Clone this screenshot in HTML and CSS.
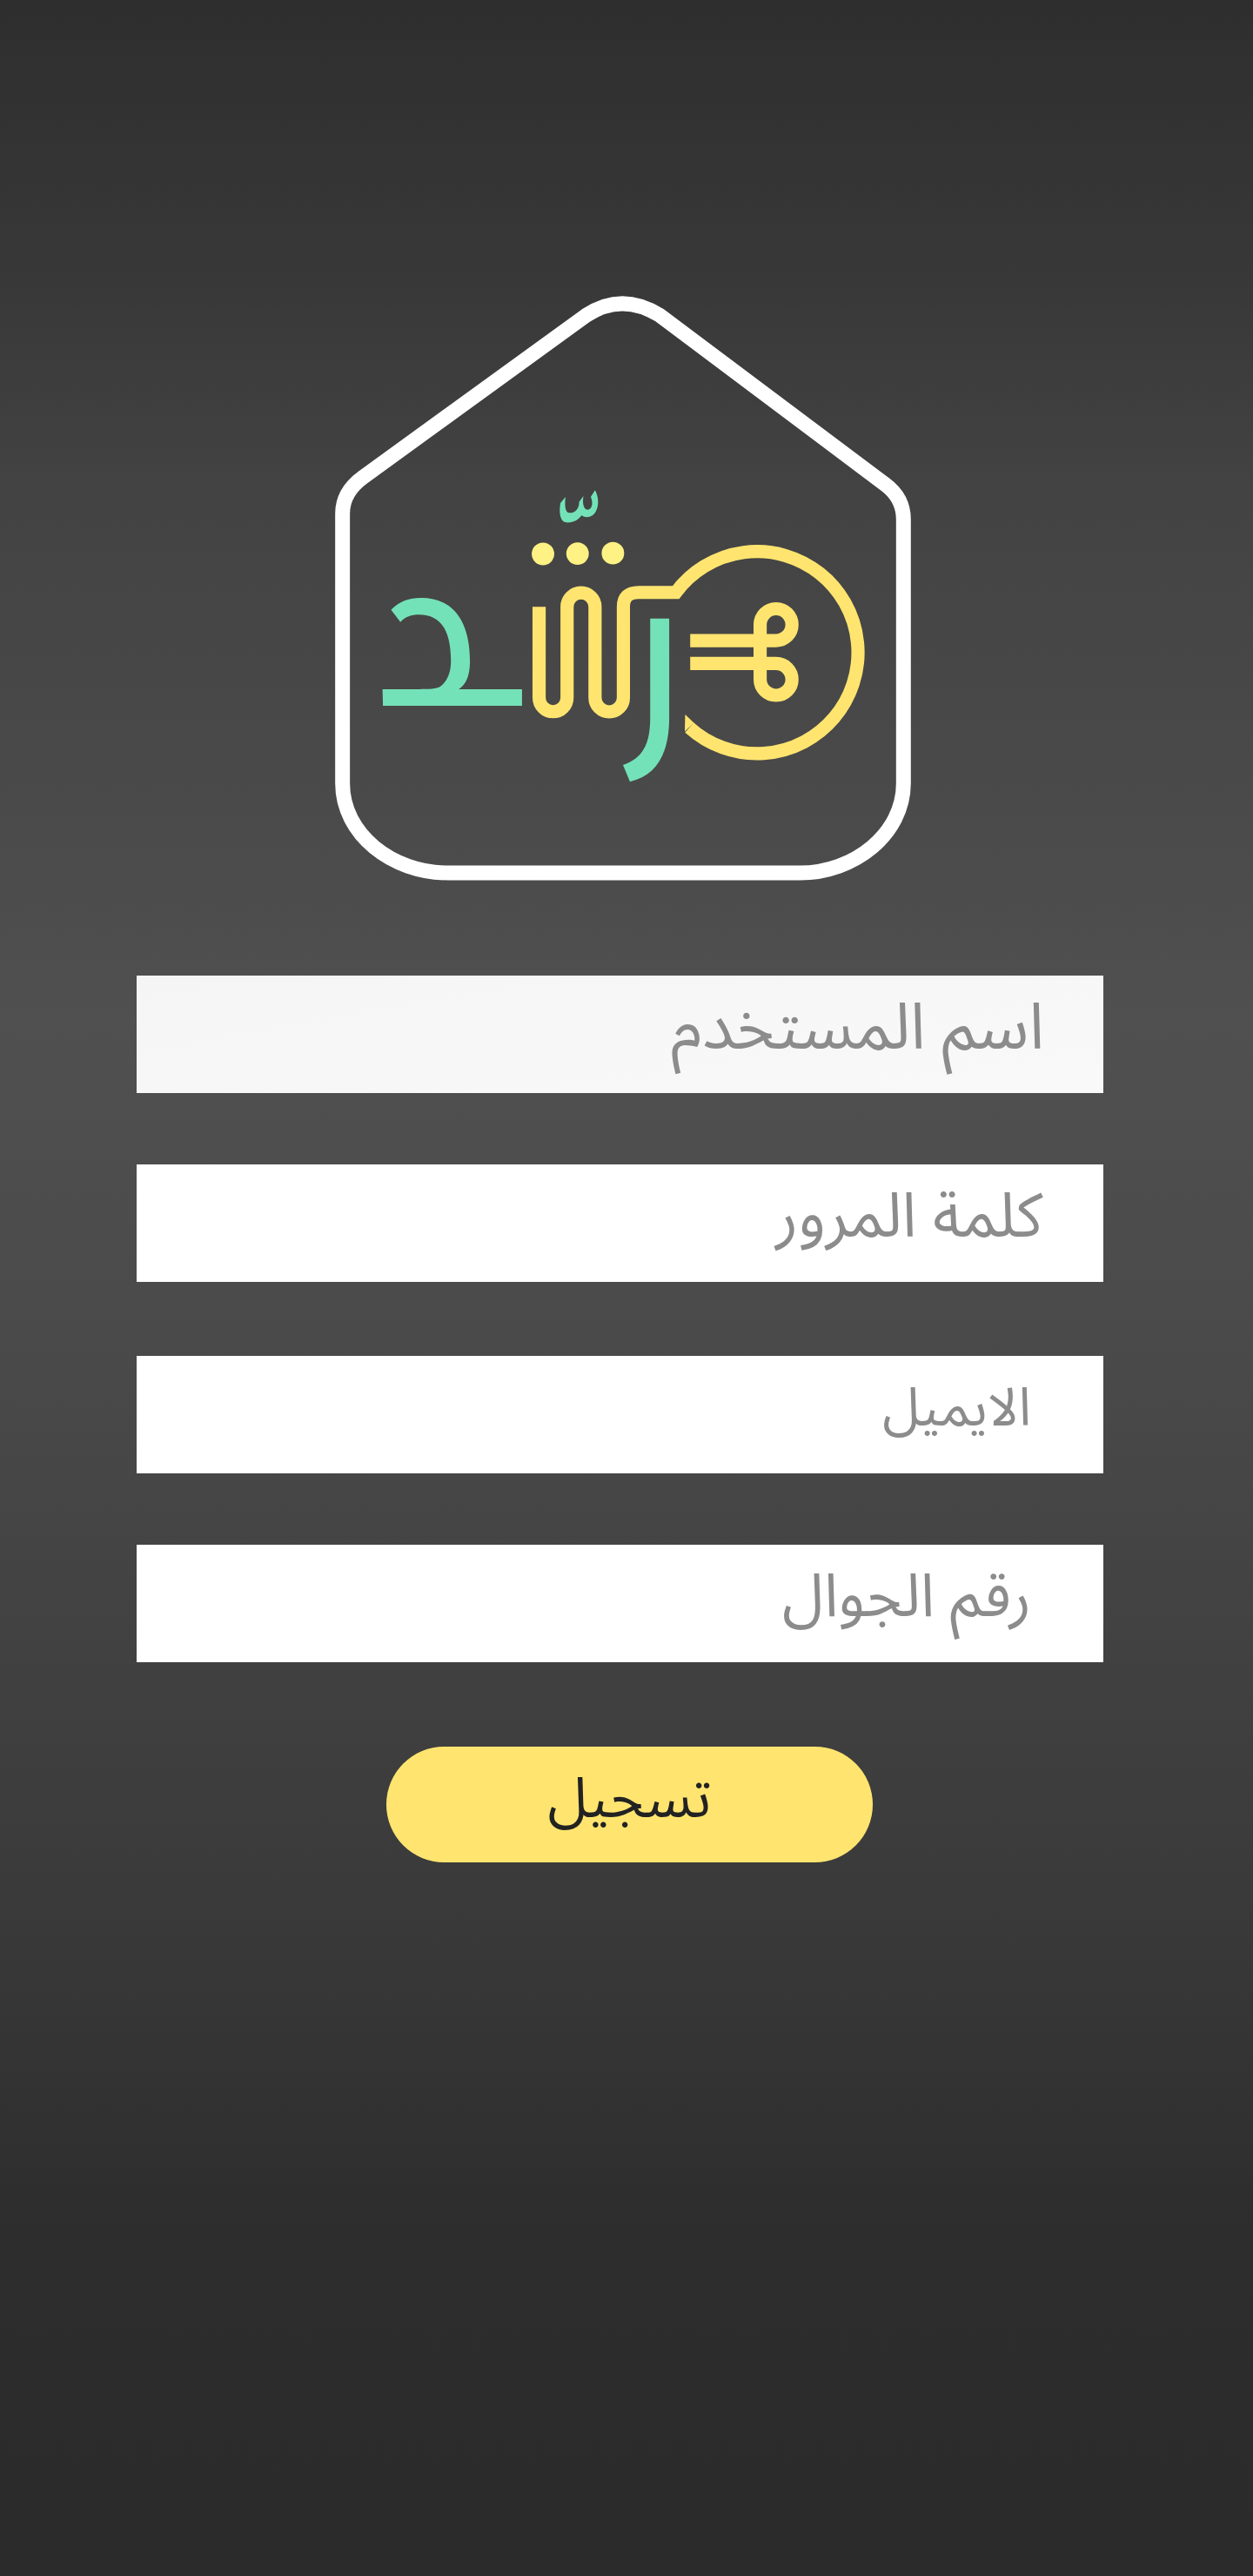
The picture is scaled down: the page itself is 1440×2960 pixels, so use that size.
FILE: index.html
```html
<!DOCTYPE html>
<html lang="ar" dir="rtl">
<head>
  <meta charset="UTF-8">
  <title>تسجيل</title>
  <link rel="stylesheet" href="styles.css">
</head>
<body>

<div class="logo">
  <svg width="700" height="700" viewBox="0 0 1568 1568">
    <!-- house -->
    <path class="house" d="M53 1300 V605 Q53 550 105 512 L680 95 Q772 34 870 95 L1450 530 Q1497 565 1497 620 V1300 C1497 1430 1370 1530 1230 1530 H325 C180 1530 53 1430 53 1300 Z"/>
    <!-- yellow line -->
    <path class="line" d="M559 845 V1079 A36 36 0 0 0 631 1079 V845 A36 36 0 0 1 703 845 V1079 A36 36 0 0 0 776 1079 V845 Q776 808 815 808 H911 A260 260 0 1 1 946 1156"/>
    <polygon class="yellow" points="935,1122 958,1144 934,1166"/>
    <path class="line" d="M948 932 H1169 A41 41 0 1 0 1128 891 V1032 A41 41 0 1 0 1169 991 H948"/>
    <circle class="dot" cx="569" cy="709" r="29"/>
    <circle class="dot" cx="658" cy="708" r="29"/>
    <circle class="dot" cx="749" cy="707" r="29"/>
    <!-- mint parts -->
    <path class="mint" d="M178 853 C200 830 225 822 255 822 C340 822 381 885 381 985 C381 1020 372 1045 352 1057 H515 V1100 H157 L156 1057 H250 C275 1057 295 1057 305 1050 C325 1035 332 1010 332 985 C332 905 305 865 250 865 C230 865 215 870 202 884 Z"/>
    <path class="mint" d="M845 875 H894 V1130 C894 1225 860 1280 793 1295 L775 1252 C825 1235 845 1200 845 1130 Z"/>
    <path class="mint" d="M703 545 C712 560 714 585 705 600 C697 615 680 618 668 610 C660 622 645 630 628 628 C612 625 610 600 614 578 L627 562 C625 580 625 600 635 603 C650 605 662 595 662 575 L673 560 C670 580 674 596 685 595 C697 592 698 575 692 562 Z"/>
  </svg>
</div>

<div class="form">
  <div class="field first">اسم المستخدم</div>
  <div class="field second">كلمة المرور</div>
  <div class="field inset short">الايميل</div>
  <div class="field inset">رقم الجوال</div>
</div>

<div class="submit">تسجيل</div>

</body>
</html>
```

FILE: styles.css
```css
html, body {
  margin: 0;
  padding: 0;
}

body {
  width: 1440px;
  height: 2960px;
  overflow: hidden;
  font-family: "Noto Sans Arabic", "DejaVu Sans", sans-serif;
  background: linear-gradient(#2e2e2e 0, #383838 320px, #434343 566px, #4c4c4c 1020px, #505050 1170px, #4a4a4a 1540px, #3a3a3a 2180px, #2d2d2d 2560px, #2b2b2b 2960px);
}

.logo {
  display: flex;
  justify-content: center;
  padding-top: 320px;
}

.house {
  fill: none;
  stroke: #fff;
  stroke-width: 38;
}

.line {
  fill: none;
  stroke: #ffe56f;
  stroke-width: 34;
}

.yellow { fill: #ffe56f; }
.dot { fill: #fdf283; }
.mint { fill: #74e2b8; }

.form {
  width: 1111px;
  margin: 101px 172px 0 0;
  display: flex;
  flex-direction: column;
  gap: 82px;
}

.field {
  height: 135px;
  padding-right: 70px;
  background: #fff;
  color: #8c8c8c;
  font-size: 71px;
  font-weight: 400;
  line-height: 121px;
  box-sizing: border-box;
}

.first {
  padding-right: 68px;
  font-size: 74px;
  background: linear-gradient(170deg, #f5f5f5, #f9f9f9);
}

.second {
  margin-bottom: 3px;
}

.inset {
  padding-right: 83px;
  font-size: 69px;
}

.short {
  font-size: 61px;
}

.submit {
  width: 559px;
  height: 133px;
  margin: 97px 437px 0 0;
  border-radius: 67px;
  background: #ffe56f;
  color: #222;
  font-size: 65px;
  line-height: 121px;
  text-align: center;
}
```
